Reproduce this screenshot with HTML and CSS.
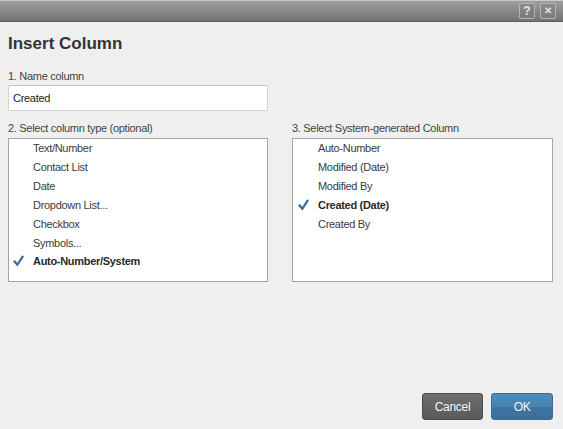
FILE: index.html
```html
<!DOCTYPE html>
<html>
<head>
<meta charset="utf-8">
<link rel="stylesheet" href="styles.css">
</head>
<body>
<div class="dialog">
  <div class="titlebar">
    <span class="tb-btn">?</span>
    <span class="tb-btn tb-close">&#x2715;</span>
  </div>
  <div class="content">
    <h1 class="heading">Insert Column</h1>
    <div class="label">1. Name column</div>
    <div class="input">Created</div>
    <div class="columns">
      <div class="col">
        <div class="label">2. Select column type (optional)</div>
        <div class="listbox">
          <div class="item"><span class="chk"></span>Text/Number</div>
          <div class="item"><span class="chk"></span>Contact List</div>
          <div class="item"><span class="chk"></span>Date</div>
          <div class="item"><span class="chk"></span>Dropdown List...</div>
          <div class="item"><span class="chk"></span>Checkbox</div>
          <div class="item"><span class="chk"></span>Symbols...</div>
          <div class="item selected"><span class="chk"><svg width="11" height="12" viewBox="0 0 11 12"><path d="M0 6.6 L2 5 L4.2 8 L9.2 0.3 L11 1.6 L4.5 11.5 Z" fill="#356c9c"/></svg></span>Auto-Number/System</div>
        </div>
      </div>
      <div class="col">
        <div class="label">3. Select System-generated Column</div>
        <div class="listbox">
          <div class="item"><span class="chk"></span>Auto-Number</div>
          <div class="item"><span class="chk"></span>Modified (Date)</div>
          <div class="item"><span class="chk"></span>Modified By</div>
          <div class="item selected"><span class="chk"><svg width="11" height="12" viewBox="0 0 11 12"><path d="M0 6.6 L2 5 L4.2 8 L9.2 0.3 L11 1.6 L4.5 11.5 Z" fill="#356c9c"/></svg></span>Created (Date)</div>
          <div class="item"><span class="chk"></span>Created By</div>
        </div>
      </div>
    </div>
  </div>
  <div class="footer">
    <button class="btn btn-cancel">Cancel</button>
    <button class="btn btn-ok">OK</button>
  </div>
</div>
</body>
</html>
```

FILE: styles.css
```css
html, body {
  margin: 0;
  padding: 0;
  height: 100%;
}
body {
  background: #efefef;
  font-family: "Liberation Sans", Arial, sans-serif;
  color: #444;
}
.dialog {
  height: 100%;
  display: flex;
  flex-direction: column;
}
.titlebar {
  box-sizing: border-box;
  height: 22px;
  border-top: 1px solid #c8c8c8;
  border-bottom: 1px solid #5e5e5e;
  background: linear-gradient(#9e9e9e, #727272);
  display: flex;
  justify-content: flex-end;
  align-items: center;
  gap: 5px;
  padding-right: 7px;
}
.tb-btn {
  box-sizing: border-box;
  width: 16px;
  height: 16px;
  border: 1px solid #b4b4b4;
  border-radius: 2px;
  background: linear-gradient(#8a8a8a, #7a7a7a);
  color: #e4e4e4;
  font-size: 12px;
  font-weight: bold;
  line-height: 14px;
  text-align: center;
}
.tb-close {
  font-size: 10px;
}
.content {
  padding: 12px 10px 0 8px;
  flex: 1;
}
.heading {
  margin: 0;
  font-size: 17px;
  line-height: 20px;
  font-weight: bold;
  color: #333;
}
.label {
  font-size: 11px;
  line-height: 14px;
  letter-spacing: -0.3px;
  color: #444;
}
.heading + .label {
  margin-top: 15px;
}
.input {
  box-sizing: border-box;
  margin-top: 2px;
  width: 260px;
  height: 26px;
  background: #fff;
  border: 1px solid #d4d4d4;
  border-top-color: #c4c4c4;
  border-radius: 2px;
  padding-left: 4px;
  font-size: 11px;
  letter-spacing: -0.3px;
  line-height: 24px;
  color: #222;
}
.columns {
  margin-top: 10px;
  display: grid;
  grid-template-columns: 260px 261px;
  column-gap: 24px;
}
.listbox {
  box-sizing: border-box;
  margin-top: 3px;
  height: 144px;
  background: #fff;
  border: 1px solid #a6a6a6;
}
.item {
  height: 18.85px;
  display: flex;
  align-items: center;
  padding-left: 4px;
  font-size: 11px;
  letter-spacing: -0.3px;
  color: #3a3a3a;
}
.col:last-child .item {
  padding-left: 5px;
}
.chk {
  width: 20px;
  height: 12px;
  display: flex;
  align-items: center;
}
.item.selected {
  font-weight: bold;
  color: #2a2a2a;
}
.footer {
  display: flex;
  justify-content: flex-end;
  gap: 8px;
  padding: 0 10px 9px 0;
}
.btn {
  box-sizing: border-box;
  width: 62px;
  height: 27px;
  border-radius: 3px;
  font-family: "Liberation Sans", Arial, sans-serif;
  font-size: 12px;
  letter-spacing: -0.3px;
  color: #f4f6f8;
  padding: 0;
}
.btn-cancel {
  width: 61px;
  background: linear-gradient(#6e6e6e, #5a5a5a);
  border: 1px solid #4a4a4a;
}
.btn-ok {
  background: linear-gradient(#4d8dbb 0%, #4683b1 50%, #3d74a0 51%, #3b709b 100%);
  border: 1px solid #3a6a92;
}
```
